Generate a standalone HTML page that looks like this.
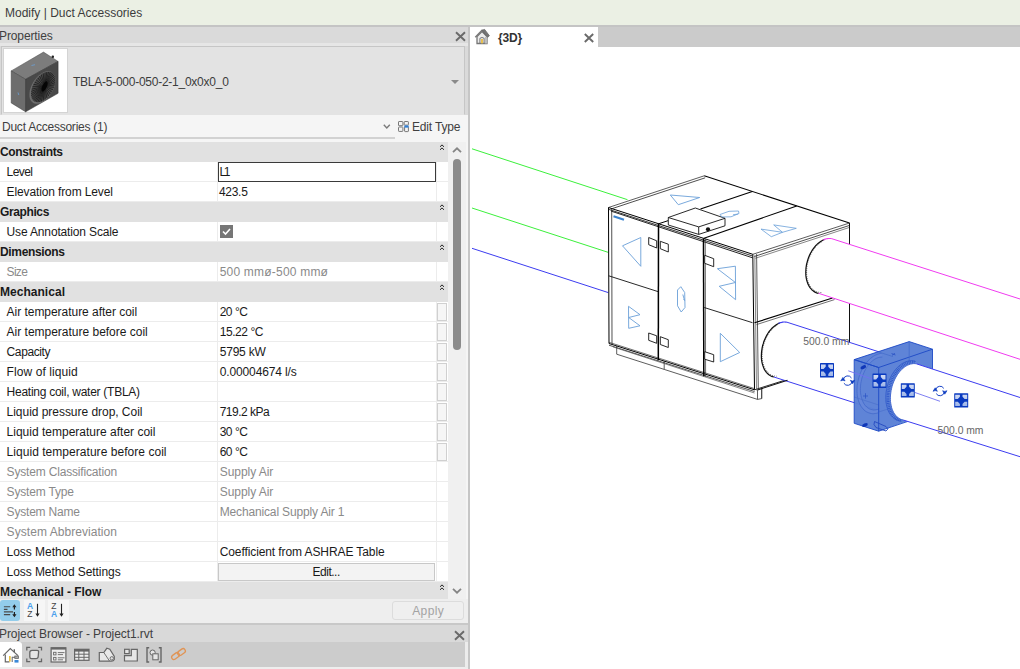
<!DOCTYPE html>
<html><head><meta charset="utf-8"><title>Revit</title>
<style>
*{box-sizing:border-box;margin:0;padding:0}
html,body{width:1020px;height:669px;overflow:hidden;background:#fff}
body{font-family:"Liberation Sans",sans-serif;font-size:12px;color:#1a1a1a;position:relative}
.abs{position:absolute}
#top{left:0;top:0;width:1020px;height:25px;background:#ebf0e4}
#topline{left:0;top:25px;width:1020px;height:2px;background:#c4c4c4}
#top span{position:absolute;left:5px;top:6px;color:#3c3c3c}
#panel{left:0;top:27px;width:468px;height:642px;background:#dadada}
#pborder{left:468px;top:27px;width:2px;height:642px;background:#c6c6c6}
#phead{left:0;top:27px;width:468px;height:18px}
#phead span{position:absolute;left:0;top:2px;color:#404040}
.row{position:absolute;left:0;width:448px;height:20px;background:#fff;border-bottom:1px solid #ececec}
.row .n{position:absolute;left:7px;top:3px;white-space:nowrap}
.row .v{position:absolute;left:219px;top:3px;white-space:nowrap}
.row.gr .n,.row.gr .v{color:#8a8a8a}
.row.hd{background:#e1e1e1;border-bottom:none}
.row .ht{position:absolute;left:0;top:3px;font-weight:bold;white-space:nowrap}
.row .chev{position:absolute;left:438.800px;top:2px}
.row .ed{position:absolute;left:218px;top:0px;width:218px;height:20px;border:1px solid #3a3a3a;background:#fff}
.row .cb{position:absolute;left:220px;top:2.5px;width:13px;height:13px}
.row .eb{position:absolute;left:218px;top:1px;width:217px;height:18px;border:1px solid #c8c8c8;background:#f3f3f3}
.row .sb{position:absolute;left:437px;top:1px;width:10px;height:18px;border:1px solid #d0d0d0;background:#f6f6f6}
.row::before{content:"";position:absolute;left:217px;top:0;width:1px;height:20px;background:#ececec}
.row::after{content:"";position:absolute;left:436px;top:0;width:1px;height:20px;background:#ececec}
.row.z1{z-index:1}
.row.hd::before,.row.hd::after{display:none}

#pheadx{left:454.700px;top:31px}
#hstrip{left:0;top:43px;width:468px;height:3px;background:#e6e6e6}
#tbox{left:1px;top:46px;width:464px;height:69px;background:#e3e3e3;border:1px solid #c6c6c6;border-bottom-color:#e3e3e3}
#thumb{left:3px;top:48px;width:65px;height:65px;background:#fff;border:1px solid #d4d4d4}
#tname{left:73px;top:75px;color:#3c3c3c;white-space:nowrap}
#tarrow{left:451px;top:80px;width:0;height:0;border-left:4px solid transparent;border-right:4px solid transparent;border-top:4px solid #8a8a8a}
#frow{left:0;top:115px;width:468px;height:27px;background:#f5f5f5}
#frow .t{position:absolute;left:2px;top:5px;color:#404040;white-space:nowrap}
#frow .ul{position:absolute;left:0;top:22px;width:395px;height:2px;background:#d2d2d2}
#frow .et{position:absolute;left:413px;top:5px;color:#404040;white-space:nowrap}
#sbar{left:448px;top:142px;width:18px;height:457px;background:#f0f0f0}
#sthumb{left:453px;top:159px;width:8px;height:191px;background:#8b8b8b;border-radius:4px}
#rstrip{left:466px;top:115px;width:2px;height:510px;background:#f5f5f5}
#btool{left:0;top:599px;width:468px;height:25px;background:#eeeeee}
#b1{left:0;top:600px;width:20px;height:21px;background:#93cdeb;border-radius:3px}
#b2{left:24px;top:600px;width:21px;height:21px;background:#f6f6f6}
#b3{left:48px;top:600px;width:21px;height:21px;background:#f6f6f6}
#apply{left:392px;top:601px;width:72px;height:19px;border:1px solid #dcdcdc;border-radius:3px;background:#efefef}
#bline{left:0;top:623px;width:468px;height:2px;background:#c8c8c8}
#pbhead{left:0;top:625px;width:468px;height:17px;background:#d9d9d9}
#pbhead span{position:absolute;left:0;top:2px;color:#404040;white-space:nowrap}
#pbtool{left:0;top:642px;width:465px;height:25px;background:#cccccc}
#pbtool1{left:0;top:642px;width:22px;height:25px;background:#fff;border-top-right-radius:3px}
#pbbot{left:0;top:667px;width:468px;height:2px;background:#eee}
#pbright{left:465px;top:642px;width:3px;height:26px;background:#ececec}
#tabbar{left:470px;top:27px;width:550px;height:20px;background:#cbcbcb}
#tab{left:470px;top:27px;width:128px;height:20px;background:#fff}
#tabt{top:31px;font-weight:bold;color:#333;white-space:nowrap}
#tabi{left:470px;top:27px;width:128px;height:20px}
#applyt{top:604px;color:#a3a3a3;white-space:nowrap}
</style></head><body>
<div id="top" class="abs"><span %%T|Modify | Duct Accessories|5%%>Modify | Duct Accessories</span></div>
<div id="topline" class="abs"></div>
<div id="panel" class="abs"></div>
<div id="pborder" class="abs"></div>
<div id="phead" class="abs"><span style="left:-1.00px;letter-spacing:-0.110px">Properties</span></div>

<svg id="pheadx" class="abs" width="11" height="11" viewBox="0 0 11 11"><path d="M1 1.200L10 9.800M10 1.200L1 9.800" stroke="#6a6a6a" stroke-width="1.900"/></svg>
<div id="hstrip" class="abs"></div><div id="tbox" class="abs"></div>
<div id="thumb" class="abs"></div>
<svg id="thumbsvg" class="abs" style="left:0;top:46px" width="70" height="70" viewBox="0 46 70 70">
<polygon points="11.2,70.9 43.5,52.1 58.1,61.4 25.6,79.3" fill="#7c7c7c" stroke="#4a4a4a" stroke-width="0.500"/>
<polygon points="11.2,70.9 25.6,79.3 25.6,111.8 11.2,102.9" fill="#6d6d6d" stroke="#3c3c3c" stroke-width="0.500"/>
<polygon points="25.600,79.300 58.100,61.400 58.100,93.300 25.600,111.800" fill="#494949" stroke="#303030" stroke-width="0.500"/>
<polygon points="55.4,80.3 55.3,82.3 55.0,84.4 54.4,86.5 53.7,88.6 52.7,90.7 51.6,92.8 50.3,94.7 48.9,96.6 47.4,98.3 45.8,99.8 44.1,101.0 42.4,102.1 40.7,102.9 39.0,103.5 37.4,103.7 35.9,103.7 34.5,103.4 33.2,102.9 32.1,102.1 31.1,101.0 30.4,99.7 29.8,98.2 29.5,96.5 29.4,94.7 29.5,92.7 29.8,90.6 30.4,88.5 31.1,86.4 32.1,84.3 33.2,82.2 34.5,80.3 35.9,78.4 37.4,76.7 39.0,75.2 40.7,74.0 42.4,72.9 44.1,72.1 45.8,71.5 47.4,71.3 48.9,71.3 50.3,71.6 51.6,72.1 52.7,72.9 53.7,74.0 54.4,75.3 55.0,76.8 55.3,78.5" fill="#6e6e6e"/>
<polygon points="55.4,80.3 55.3,82.1 55.0,84.1 54.5,86.1 53.8,88.1 52.9,90.1 51.8,92.0 50.6,93.9 49.3,95.6 47.9,97.2 46.4,98.6 44.8,99.8 43.2,100.8 41.6,101.6 40.0,102.1 38.5,102.3 37.1,102.3 35.8,102.0 34.6,101.5 33.5,100.7 32.6,99.7 31.9,98.5 31.4,97.1 31.1,95.5 31.0,93.7 31.1,91.9 31.4,89.9 31.9,87.9 32.6,85.9 33.5,83.9 34.6,82.0 35.8,80.1 37.1,78.4 38.5,76.8 40.0,75.4 41.6,74.2 43.2,73.2 44.8,72.4 46.4,71.9 47.9,71.7 49.3,71.7 50.6,72.0 51.8,72.5 52.9,73.3 53.8,74.3 54.5,75.5 55.0,76.9 55.3,78.5" fill="#4c4c4c"/>
<path d="M44.6 86.4L55.2 80.4M44.6 86.4L55.1 82.6M44.6 86.4L54.6 84.9M44.6 86.4L53.9 87.3M44.6 86.4L52.9 89.7M44.6 86.4L51.7 91.9M44.6 86.4L50.3 94.1M44.6 86.4L48.6 96.1M44.6 86.4L46.9 97.9M44.6 86.4L45.1 99.4M44.6 86.4L43.2 100.6M44.6 86.4L41.3 101.5M44.6 86.4L39.5 102.0M44.6 86.4L37.8 102.1M44.6 86.4L36.1 101.9M44.6 86.4L34.7 101.3M44.6 86.4L33.5 100.3M44.6 86.4L32.5 99.1M44.6 86.4L31.8 97.5M44.6 86.4L31.3 95.6M44.6 86.4L31.2 93.6M44.6 86.4L31.3 91.4M44.6 86.4L31.8 89.1M44.6 86.4L32.5 86.7M44.6 86.4L33.5 84.3M44.6 86.4L34.7 82.1M44.6 86.4L36.1 79.9M44.6 86.4L37.8 77.9M44.6 86.4L39.5 76.1M44.6 86.4L41.3 74.6M44.6 86.4L43.2 73.4M44.6 86.4L45.1 72.5M44.6 86.4L46.9 72.0M44.6 86.4L48.6 71.9M44.6 86.4L50.3 72.1M44.6 86.4L51.7 72.7M44.6 86.4L52.9 73.7M44.6 86.4L53.9 74.9M44.6 86.4L54.6 76.5M44.6 86.4L55.1 78.4" stroke="#141414" stroke-width="0.700" fill="none"/>
<ellipse cx="44.600" cy="86.400" rx="2.200" ry="5.500" transform="rotate(25 44.600 86.400)" fill="#050505"/>
<rect x="51.600" y="55.600" width="2.400" height="2.400" rx="1" fill="#222"/>
<path d="M31.500 65.500l3.500 -0.800M18 92.500l0.800 2.500" stroke="#6a9fd8" stroke-width="0.800" fill="none"/>
</svg>
<div id="tname" class="abs" style="left:73.00px;letter-spacing:-0.252px">TBLA-5-000-050-2-1_0x0x0_0</div>
<div id="tarrow" class="abs"></div>
<div id="frow" class="abs"><span class="t" style="left:2.00px;letter-spacing:-0.236px">Duct Accessories (1)</span><span class="ul"></span>
<svg style="position:absolute;left:383px;top:9px" width="8" height="6" viewBox="0 0 8 6"><path d="M0.800 0.800L3.800 4L6.800 0.800" stroke="#7a7a7a" stroke-width="1.400" fill="none"/></svg>
<svg style="position:absolute;left:398px;top:6px" width="12" height="12" viewBox="0 0 12 12"><g fill="#f4f4f4" stroke="#777" stroke-width="1"><rect x="0.500" y="0.500" width="4.400" height="4.200" rx="0.600"/><rect x="0.500" y="6" width="4.400" height="4.400" rx="0.600"/><rect x="6.200" y="0.500" width="4.200" height="3.600" rx="0.600"/><rect x="6.600" y="5.600" width="3.800" height="5" rx="0.600"/></g><rect x="6.400" y="4.400" width="4.200" height="2.200" fill="#2f7fd6"/></svg>
<span class="et" style="left:412.00px;letter-spacing:-0.179px">Edit Type</span></div>
<div class="row hd" style="top:142px"><span class="ht" style="left:0.00px;letter-spacing:-0.369px">Constraints</span><svg class="chev" width="6" height="7" viewBox="0 0 6 7"><path d="M1 2.800L3 0.900L5 2.800M1 5.800L3 3.900L5 5.800" stroke="#222" stroke-width="1" fill="none"/></svg></div>
<div class="row z1" style="top:162px"><span class="n" style="left:6.60px;letter-spacing:-0.600px">Level</span><span class="ed"></span><span class="v" style="left:219.40px;letter-spacing:-2.200px">L1</span></div>
<div class="row" style="top:182px"><span class="n" style="left:6.60px;letter-spacing:-0.128px">Elevation from Level</span><span class="v" style="left:219.00px;letter-spacing:-0.300px">423.5</span></div>
<div class="row hd" style="top:202px"><span class="ht" style="left:0.00px;letter-spacing:-0.386px">Graphics</span><svg class="chev" width="6" height="7" viewBox="0 0 6 7"><path d="M1 2.800L3 0.900L5 2.800M1 5.800L3 3.900L5 5.800" stroke="#222" stroke-width="1" fill="none"/></svg></div>
<div class="row" style="top:222px"><span class="n" style="left:6.60px;letter-spacing:-0.152px">Use Annotation Scale</span><span class="cb"><svg width="13" height="13" viewBox="0 0 13 13"><rect width="13" height="13" fill="#767676"/><path d="M3 6.5 L5.5 9 L10 4" stroke="#fff" stroke-width="1.6" fill="none"/></svg></span></div>
<div class="row hd" style="top:242px"><span class="ht" style="left:0.00px;letter-spacing:-0.330px">Dimensions</span><svg class="chev" width="6" height="7" viewBox="0 0 6 7"><path d="M1 2.800L3 0.900L5 2.800M1 5.800L3 3.900L5 5.800" stroke="#222" stroke-width="1" fill="none"/></svg></div>
<div class="row gr" style="top:262px"><span class="n" style="left:6.60px;letter-spacing:-0.700px">Size</span><span class="v" style="left:219.70px;letter-spacing:0.206px">500 mmø-500 mmø</span></div>
<div class="row hd" style="top:282px"><span class="ht" style="left:0.00px;letter-spacing:0.030px">Mechanical</span><svg class="chev" width="6" height="7" viewBox="0 0 6 7"><path d="M1 2.800L3 0.900L5 2.800M1 5.800L3 3.900L5 5.800" stroke="#222" stroke-width="1" fill="none"/></svg></div>
<div class="row" style="top:302px"><span class="n" style="left:6.60px;letter-spacing:-0.036px">Air temperature after coil</span><span class="v" style="left:219.70px;letter-spacing:-0.495px">20 °C</span><span class="sb"></span></div>
<div class="row" style="top:322px"><span class="n" style="left:6.60px;letter-spacing:-0.010px">Air temperature before coil</span><span class="v" style="left:219.70px;letter-spacing:-0.437px">15.22 °C</span><span class="sb"></span></div>
<div class="row" style="top:342px"><span class="n" style="left:6.60px;letter-spacing:-0.398px">Capacity</span><span class="v" style="left:219.70px;letter-spacing:-0.195px">5795 kW</span><span class="sb"></span></div>
<div class="row" style="top:362px"><span class="n" style="left:6.60px;letter-spacing:0.090px">Flow of liquid</span><span class="v" style="left:219.70px;letter-spacing:-0.125px">0.00004674 l/s</span><span class="sb"></span></div>
<div class="row" style="top:382px"><span class="n" style="left:6.60px;letter-spacing:-0.264px">Heating coil, water (TBLA)</span><span class="sb"></span></div>
<div class="row" style="top:402px"><span class="n" style="left:6.60px;letter-spacing:-0.036px">Liquid pressure drop, Coil</span><span class="v" style="left:219.70px;letter-spacing:-0.496px">719.2 kPa</span><span class="sb"></span></div>
<div class="row" style="top:422px"><span class="n" style="left:6.60px;letter-spacing:0.004px">Liquid temperature after coil</span><span class="v" style="left:219.70px;letter-spacing:-0.495px">30 °C</span><span class="sb"></span></div>
<div class="row" style="top:442px"><span class="n" style="left:6.60px;letter-spacing:0.040px">Liquid temperature before coil</span><span class="v" style="left:219.70px;letter-spacing:-0.495px">60 °C</span><span class="sb"></span></div>
<div class="row gr" style="top:462px"><span class="n" style="left:6.60px;letter-spacing:-0.174px">System Classification</span><span class="v" style="left:219.70px;letter-spacing:-0.040px">Supply Air</span></div>
<div class="row gr" style="top:482px"><span class="n" style="left:6.60px;letter-spacing:-0.180px">System Type</span><span class="v" style="left:219.70px;letter-spacing:-0.040px">Supply Air</span></div>
<div class="row gr" style="top:502px"><span class="n" style="left:6.60px;letter-spacing:-0.198px">System Name</span><span class="v" style="left:219.70px;letter-spacing:-0.147px">Mechanical Supply Air 1</span></div>
<div class="row gr" style="top:522px"><span class="n" style="left:6.60px;letter-spacing:0.055px">System Abbreviation</span></div>
<div class="row" style="top:542px"><span class="n" style="left:6.60px;letter-spacing:-0.036px">Loss Method</span><span class="v" style="left:219.70px;letter-spacing:-0.096px">Coefficient from ASHRAE Table</span></div>
<div class="row" style="top:562px"><span class="n" style="left:6.60px;letter-spacing:-0.070px">Loss Method Settings</span><span class="eb"></span><span class="v" style="left:312.60px;letter-spacing:-0.500px">Edit...</span></div>
<div class="row hd" style="top:582px"><span class="ht" style="left:0.00px;letter-spacing:-0.090px">Mechanical - Flow</span><svg class="chev" width="6" height="7" viewBox="0 0 6 7"><path d="M1 2.800L3 0.900L5 2.800M1 5.800L3 3.900L5 5.800" stroke="#222" stroke-width="1" fill="none"/></svg></div>
<div id="rstrip" class="abs"></div>
<div id="sbar" class="abs"></div>
<div id="sthumb" class="abs"></div>
<svg class="abs" style="left:451px;top:146px" width="12" height="8" viewBox="0 0 12 8"><path d="M2 6.200L6 2.300L10 6.200" stroke="#858585" stroke-width="1.800" fill="none"/></svg>
<svg class="abs" style="left:451px;top:587px" width="12" height="8" viewBox="0 0 12 8"><path d="M2 1.800L6 5.700L10 1.800" stroke="#858585" stroke-width="1.800" fill="none"/></svg>
<div id="btool" class="abs"></div>
<div id="b1" class="abs"></div><div id="b2" class="abs"></div><div id="b3" class="abs"></div>
<svg class="abs" style="left:0;top:599px" width="72" height="25" viewBox="0 0 72 25">
<g stroke="#4a4a4a" stroke-width="1.100" fill="none"><path d="M3.900 7.800H10.200M3.900 10.400H7.500M3.900 12.900H13M3.900 15.600H10.200"/><path d="M14.400 6.500V10.400M14.400 12.900V17" stroke="#222" stroke-width="1.200"/><path d="M12.300 8.300L14.400 5.300L16.500 8.300ZM12.300 15.200L14.400 18.200L16.500 15.200Z" fill="#222" stroke="none"/>
<path d="M37.500 4.800V16" stroke="#222"/><path d="M35.400 14.500L37.500 17.700L39.600 14.500Z" fill="#222" stroke="none"/>
<path d="M61.500 4.800V16" stroke="#222"/><path d="M59.400 14.500L61.500 17.700L63.600 14.500Z" fill="#222" stroke="none"/></g>
<text x="26.900" y="10.400" font-family="Liberation Sans, sans-serif" font-size="8.500" font-weight="bold" fill="#4aa0ec">A</text>
<text x="27.200" y="17.700" font-family="Liberation Sans, sans-serif" font-size="8.500" fill="#444">Z</text>
<text x="51.200" y="10.400" font-family="Liberation Sans, sans-serif" font-size="8.500" fill="#444">Z</text>
<text x="50.900" y="17.700" font-family="Liberation Sans, sans-serif" font-size="8.500" font-weight="bold" fill="#4aa0ec">A</text>
</svg>
<div id="apply" class="abs"></div><div id="applyt" class="abs" style="left:412.20px;letter-spacing:0.405px">Apply</div>
<div id="bline" class="abs"></div>
<div id="pbhead" class="abs"><span style="left:-1.00px;letter-spacing:-0.071px">Project Browser - Project1.rvt</span></div>
<svg class="abs" style="left:454px;top:630px" width="11" height="11" viewBox="0 0 11 11"><path d="M1 1.200L10 9.800M10 1.200L1 9.800" stroke="#6a6a6a" stroke-width="1.900"/></svg>
<div id="pbtool" class="abs"></div><div id="pbtool1" class="abs"></div><div id="pbbot" class="abs"></div><div id="pbright" class="abs"></div>
<svg class="abs" style="left:0;top:642px" width="200" height="25" viewBox="0 642 200 25">
<g fill="none" stroke="#666" stroke-width="1.2">
<path d="M3.2 655.600L10.300 648.600L18 655.600"/><path d="M14.300 649.300V652.200" stroke-width="1.400"/><path d="M5.300 654.500V661.800H9.500"/>
<path d="M12.200 656.800V662M12.200 657.300H15" stroke-width="1"/><rect x="14.800" y="656" width="3.600" height="2.400" fill="#aaa" stroke-width="0.800"/>
<path d="M26.800 650.500V647.300H30.200M38.200 647.300H41.500V650.500M41.500 658.500V661.600H38.200M30.200 661.600H26.800V658.500" stroke-width="1.300"/>
<path d="M29.800 652.500Q29.800 650.300 32 650.300H37Q38.800 650.300 38.600 652L38.200 656.500Q38 658.600 36 658.600H31.500Q29.800 658.600 29.800 657Z" fill="#e6e6e6" stroke-width="1.300"/>
<rect x="51.100" y="647.800" width="14.800" height="14.200" fill="#eee"/><path d="M51.100 648.500H65.900" stroke-width="2.200"/>
<rect x="53.600" y="652.300" width="2.400" height="2.600" stroke-width="0.900"/><rect x="53.600" y="657.400" width="2.400" height="2.600" stroke-width="0.900"/>
<path d="M57.800 652.600H64.500M57.800 654.600H63M57.800 657.800H64.500M57.800 659.800H63" stroke-width="0.900"/>
<rect x="74.600" y="649.300" width="14.400" height="11" fill="#eee"/><path d="M74.600 650.400H89 " stroke-width="2.400"/><path d="M74.600 654.200H89M74.600 657.300H89M78.800 651V660.300M84 651V660.300" stroke-width="1"/>
<path d="M99.300 661.200V652.500H103.800L106.800 648.300L109.800 649.200L114.300 656.500V659.500Q113.500 661.200 111.500 661.200Z" fill="#e8e8e8" stroke-width="1.200"/><path d="M103.800 652.500L109.500 661" stroke-width="0.900"/><circle cx="111.800" cy="658.300" r="1.700" fill="#ddd" stroke-width="0.900"/>
<rect x="124.600" y="649.300" width="4.600" height="4.300" fill="#e6e6e6"/><path d="M131.300 649.300H137.300V661H124.500V655.600H131.300Z" fill="#e6e6e6"/>
<path d="M149.200 647.800H147V662H149.200M158.800 647.800H161V662H158.800" stroke-width="1.400"/><circle cx="152.600" cy="652.600" r="2.600" fill="#e6e6e6" stroke-width="1"/><rect x="152.800" y="653.800" width="5.400" height="6" fill="#e6e6e6" stroke-width="1"/>
</g>
<rect x="9" y="656" width="1.700" height="5.600" fill="#e8c040"/>
<rect x="14.500" y="660" width="4" height="2.600" fill="#3b8ad8"/>
<g fill="none" stroke="#e09455" stroke-width="1.300"><rect x="171.300" y="653.800" width="8.400" height="4.600" rx="2.300" transform="rotate(-36 175.500 656.100)"/><rect x="177.300" y="649.800" width="8.400" height="4.600" rx="2.300" transform="rotate(-36 181.500 652.100)"/></g>
</svg>
<div id="tabbar" class="abs"></div>
<div id="tab" class="abs"></div><div id="tabt" class="abs" style="left:498.00px;letter-spacing:-0.150px">{3D}</div><div id="tabi" class="abs">
<svg style="position:absolute;left:3.600px;top:1.400px" width="17" height="17" viewBox="0 0 17 17"><path d="M3 8.500V15.500H13V8.500L8 3.500Z" fill="#ececec" stroke="#767676" stroke-width="1.300"/><path d="M10.800 9V15.500H13V8.500Z" fill="#bdbdbd"/><path d="M1.300 9.300L8 2.300L11.500 6" fill="none" stroke="#7a7a7a" stroke-width="1.500"/><path d="M8 2.300L10.600 1.400L15.400 7.800L13.600 9.300Z" fill="#747474" stroke="#666" stroke-width="0.800"/><path d="M5.900 15.500V10.300Q8 8.600 10.100 10.300V15.500" fill="none" stroke="#777" stroke-width="1"/><rect x="7" y="11" width="2" height="4.300" fill="#e8c050"/></svg>
<svg style="position:absolute;left:114px;top:6px" width="10" height="10" viewBox="0 0 10 10"><path d="M0.800 1L9.200 9M9.200 1L0.800 9" stroke="#6a6a6a" stroke-width="1.900"/></svg>
</div>

<svg id="view" width="550" height="622" viewBox="470 47 550 622" style="position:absolute;left:470px;top:47px">
<line x1="472.0" y1="148.8" x2="627.5" y2="199.7" stroke="#3cf03c" stroke-width="1" />
<line x1="472.0" y1="208.0" x2="608.3" y2="252.4" stroke="#3cf03c" stroke-width="1" />
<line x1="472.0" y1="248.3" x2="608.3" y2="292.6" stroke="#3c3cf0" stroke-width="1" />
<path d="M608.5 207.5 L704.2 175.8 L849.5 223.0 L849.5 359.8 L754.5 389.8 L609.0 343.5 Z" stroke="none" stroke-width="0" fill="#fff" stroke-linejoin="round" />
<path d="M616.7 346.0 L616.7 354.2 L664.2 369.4 L664.2 361.0" stroke="#333" stroke-width="0.8" fill="#fff" stroke-linejoin="round" />
<path d="M664.2 369.4 L757.5 399.4 L761.7 398.6 L761.7 388.0" stroke="#333" stroke-width="0.8" fill="#fff" stroke-linejoin="round" />
<line x1="757.5" y1="399.4" x2="757.5" y2="390.5" stroke="#333" stroke-width="0.8" />
<line x1="761.7" y1="398.6" x2="787.5" y2="380.3" stroke="#333" stroke-width="0.0" />
<path d="M608.5 207.5 L704.2 175.8 L849.5 223.0 L752.8 254.3 Z" stroke="none" stroke-width="0" fill="#fff" stroke-linejoin="round" />
<line x1="608.5" y1="207.5" x2="704.2" y2="175.8" stroke="#333" stroke-width="0.8" />
<line x1="704.2" y1="175.8" x2="849.5" y2="223.0" stroke="#000" stroke-width="1.1" />
<line x1="849.5" y1="223.0" x2="752.8" y2="254.3" stroke="#333" stroke-width="0.8" />
<line x1="610.7" y1="209.1" x2="705.2" y2="177.8" stroke="#222" stroke-width="0.8" />
<line x1="754.3" y1="256.5" x2="849.5" y2="225.4" stroke="#222" stroke-width="0.8" />
<line x1="755.3" y1="258.3" x2="849.5" y2="227.4" stroke="#555" stroke-width="0.7" />
<path d="M608.5 207.5 L752.8 254.3 L754.5 389.8 L609.0 343.5 Z" stroke="#000" stroke-width="1.0" fill="#fff" stroke-linejoin="round" />
<line x1="608.5" y1="209.3" x2="752.8" y2="256.1" stroke="#222" stroke-width="0.9" />
<line x1="611.0" y1="211.1" x2="752.8" y2="257.9" stroke="#111" stroke-width="0.9" />
<line x1="611.7" y1="208.5" x2="612.0" y2="344.7" stroke="#222" stroke-width="0.8" />
<line x1="609.0" y1="342.3" x2="754.5" y2="388.6" stroke="#333" stroke-width="0.7" />
<line x1="609.0" y1="345.2" x2="754.5" y2="391.5" stroke="#222" stroke-width="0.8" />
<line x1="613.0" y1="346.9" x2="754.5" y2="393.0" stroke="#555" stroke-width="0.7" />
<line x1="849.5" y1="223.0" x2="849.5" y2="359.8" stroke="#111" stroke-width="1.0" />
<line x1="849.5" y1="359.8" x2="754.5" y2="389.8" stroke="#111" stroke-width="0.9" />
<line x1="754.8" y1="255.3" x2="756.5" y2="389.3" stroke="#555" stroke-width="0.7" />
<line x1="756.6" y1="254.1" x2="758.3" y2="388.6" stroke="#333" stroke-width="0.8" />
<line x1="658.5" y1="223.8" x2="658.3" y2="360.2" stroke="#000" stroke-width="1.5" />
<line x1="703.5" y1="238.4" x2="703.8" y2="376.2" stroke="#000" stroke-width="1.5" />
<line x1="705.3" y1="239.0" x2="705.6" y2="376.8" stroke="#333" stroke-width="0.7" />
<line x1="608.7" y1="275.8" x2="658.3" y2="291.7" stroke="#111" stroke-width="0.9" />
<line x1="704.2" y1="307.5" x2="752.5" y2="322.7" stroke="#111" stroke-width="0.9" />
<line x1="754.5" y1="322.8" x2="832.5" y2="298.0" stroke="#000" stroke-width="1.2" />
<line x1="756.5" y1="324.6" x2="834.5" y2="299.6" stroke="#333" stroke-width="0.7" />
<line x1="752.3" y1="191.5" x2="700.5" y2="209.0" stroke="#000" stroke-width="1.1" />
<line x1="796.7" y1="205.9" x2="704.0" y2="238.2" stroke="#000" stroke-width="1.1" />
<line x1="658.5" y1="223.8" x2="668.3" y2="220.6" stroke="#000" stroke-width="1.0" />
<path d="M668.3 217.5 L695.3 208.0 L725.0 218.3 L725.0 225.8 L698.7 234.4 L668.3 225.0 Z" stroke="#111" stroke-width="0.9" fill="#fff" stroke-linejoin="round" />
<line x1="668.3" y1="217.5" x2="698.7" y2="226.9" stroke="#111" stroke-width="0.9" />
<line x1="698.7" y1="226.9" x2="725.0" y2="218.3" stroke="#111" stroke-width="0.9" />
<line x1="698.7" y1="226.9" x2="698.7" y2="234.4" stroke="#111" stroke-width="0.9" />
<circle cx="708" cy="229.3" r="2.1" fill="#111"/>
<path d="M648.7 237.5 L656.7 240.8 L656.7 248.0 L648.7 244.7 Z" stroke="#111" stroke-width="0.9" fill="#fff" stroke-linejoin="round" />
<path d="M660.3 241.3 L668.3 244.2 L668.3 252.0 L660.3 248.7 Z" stroke="#111" stroke-width="0.9" fill="#fff" stroke-linejoin="round" />
<path d="M704.7 255.3 L713.7 258.7 L713.7 266.7 L704.7 263.3 Z" stroke="#111" stroke-width="0.9" fill="#fff" stroke-linejoin="round" />
<path d="M648.7 333.0 L656.7 335.8 L656.7 343.3 L648.7 340.3 Z" stroke="#111" stroke-width="0.9" fill="#fff" stroke-linejoin="round" />
<path d="M660.3 336.7 L668.3 339.7 L668.3 347.5 L660.3 344.5 Z" stroke="#111" stroke-width="0.9" fill="#fff" stroke-linejoin="round" />
<path d="M704.7 351.7 L713.7 354.7 L713.7 362.0 L704.7 359.2 Z" stroke="#111" stroke-width="0.9" fill="#fff" stroke-linejoin="round" />
<path d="M670.3 195.0 L699.7 197.5 L678.3 204.7 Z" stroke="#6a9fd8" stroke-width="0.9" fill="none" stroke-linejoin="round" />
<path d="M622.5 245.8 L640.8 237.5 L640.8 266.3 Z" stroke="#6a9fd8" stroke-width="0.9" fill="none" stroke-linejoin="round" />
<path d="M628.5 306.3 L640.0 314.7 L628.7 317.5 L640.0 325.8 L628.7 328.3 Z" stroke="#6a9fd8" stroke-width="0.9" fill="none" stroke-linejoin="round" />
<path d="M677.5 290.0 L680.8 286.7 L684.7 292.5 L685.0 307.5 L681.2 312.0 L677.5 305.8 Z" stroke="#6a9fd8" stroke-width="0.9" fill="none" stroke-linejoin="round" />
<path d="M682.8 294.5 L684.6 300.5 L683.6 299.2" stroke="#6a9fd8" stroke-width="0.9" fill="none" stroke-linejoin="round" />
<path d="M717.4 268.7 L735.4 266.2 L735.6 299.7 L719.2 286.3 L735.4 282.5 Z" stroke="#6a9fd8" stroke-width="0.9" fill="none" stroke-linejoin="round" />
<path d="M720.3 333.3 L739.7 352.5 L720.3 361.7 Z" stroke="#6a9fd8" stroke-width="0.9" fill="none" stroke-linejoin="round" />
<path d="M720.0 214.5 L729.0 211.3 L738.5 211.0 L739.0 213.5 L731.0 216.8 L722.0 217.0 Z" stroke="#6a9fd8" stroke-width="0.8" fill="none" stroke-linejoin="round" />
<line x1="733.0" y1="214.8" x2="738.0" y2="214.0" stroke="#6a9fd8" stroke-width="0.8" />
<path d="M761.0 229.1 L782.5 232.3 L771.3 236.7 Z" stroke="#6a9fd8" stroke-width="0.8" fill="none" stroke-linejoin="round" />
<path d="M773.7 224.9 L796.3 228.3 L782.5 232.3 Z" stroke="#6a9fd8" stroke-width="0.8" fill="none" stroke-linejoin="round" />
<line x1="613.5" y1="216.3" x2="624.0" y2="219.8" stroke="#3d85d0" stroke-width="2.2" />
<path d="M831.8 238.7 L830.4 238.5 L828.9 238.5 L827.4 238.7 L825.9 239.0 L824.4 239.5 L822.8 240.2 L821.3 241.0 L819.9 242.0 L818.4 243.1 L817.0 244.4 L815.6 245.8 L814.4 247.3 L813.1 249.0 L812.0 250.7 L810.9 252.5 L809.9 254.5 L809.0 256.5 L808.2 258.5 L807.5 260.6 L807.0 262.8 L806.5 264.9 L806.2 267.1 L805.9 269.2 L805.8 271.4 L805.8 273.5 L805.9 275.5 L806.2 277.5 L806.6 279.4 L807.0 281.3 L807.6 283.0 L808.3 284.7 L809.1 286.2 L810.0 287.6 L811.0 288.9 L812.1 290.0 L813.3 291.0 L814.5 291.8 L815.8 292.5 L817.2 293.0 L818.6 293.3 L1020.0 359.3 L1020.0 299.0 Z" stroke="none" stroke-width="0" fill="#fff" stroke-linejoin="round" />
<path d="M824.5 239.4 L823.2 240.0 L821.9 240.7 L820.6 241.5 L819.3 242.4 L818.0 243.4 L816.8 244.6 L815.6 245.8 L814.5 247.2 L813.4 248.6 L812.3 250.1 L811.4 251.7 L810.5 253.3 L809.6 255.1 L808.9 256.8 L808.2 258.6 L807.6 260.5 L807.1 262.4 L806.6 264.2 L806.3 266.1 L806.0 268.0 L805.9 269.9 L805.8 271.8 L805.8 273.6 L805.9 275.4 L806.1 277.2 L806.4 278.9 L806.8 280.5 L807.3 282.1 L807.8 283.6 L808.5 285.0 L809.2 286.4 L810.0 287.6 L810.9 288.7 L811.8 289.7 L812.8 290.6 L813.9 291.4 L815.0 292.1 L816.1 292.6 L817.3 293.1 L818.6 293.3" stroke="#111" stroke-width="1.25" fill="none" stroke-linejoin="round" />
<path d="M822.0 241.6 L820.7 242.4 L819.5 243.3 L818.3 244.3 L817.1 245.4 L816.0 246.6 L814.9 247.9 L813.8 249.3 L812.9 250.7 L811.9 252.2 L811.1 253.8 L810.3 255.5 L809.5 257.2 L808.9 258.9 L808.3 260.7 L807.8 262.5 L807.4 264.3 L807.1 266.2 L806.8 268.0 L806.7 269.8 L806.6 271.6 L806.6 273.4 L806.7 275.1 L806.9 276.8 L807.2 278.4 L807.6 280.0 L808.0 281.5 L808.6 283.0 L809.2 284.3 L809.9 285.6 L810.6 286.8 L811.5 287.9 L812.4 288.9 L813.3 289.7 L814.3 290.5 L815.4 291.1 L816.5 291.6 L817.7 292.0 L818.9 292.3 L820.1 292.5 L821.3 292.5" stroke="#222" stroke-width="1.0" fill="none" stroke-linejoin="round" stroke-dasharray="0.6 1.5"/>
<path d="M831.8 238.7 L830.8 238.5 L829.7 238.5 L828.7 238.5 L827.6 238.6 L826.5 238.8 L825.4 239.1 L824.3 239.5 L823.2 240.0" stroke="#f03cf0" stroke-width="1.1" fill="none" stroke-linejoin="round" />
<line x1="831.8" y1="238.7" x2="1020.0" y2="299.0" stroke="#f03cf0" stroke-width="1" />
<line x1="818.6" y1="293.3" x2="1020.0" y2="359.3" stroke="#f03cf0" stroke-width="1" />
<path d="M786.9 322.2 L785.5 322.0 L784.0 322.0 L782.6 322.2 L781.1 322.5 L779.6 323.0 L778.1 323.7 L776.6 324.5 L775.2 325.4 L773.7 326.6 L772.4 327.8 L771.0 329.2 L769.8 330.8 L768.6 332.4 L767.4 334.1 L766.4 336.0 L765.4 337.9 L764.6 339.9 L763.8 342.0 L763.1 344.1 L762.5 346.2 L762.1 348.4 L761.7 350.5 L761.5 352.7 L761.4 354.8 L761.4 356.9 L761.5 359.0 L761.8 361.0 L762.1 363.0 L762.6 364.8 L763.2 366.6 L763.9 368.2 L764.6 369.8 L765.5 371.2 L766.5 372.5 L767.6 373.6 L768.7 374.6 L769.9 375.4 L771.2 376.1 L772.5 376.6 L773.9 377.0 L880.0 410.9 L880.0 352.2 Z" stroke="none" stroke-width="0" fill="#fff" stroke-linejoin="round" />
<path d="M779.7 322.9 L778.4 323.5 L777.1 324.2 L775.9 325.0 L774.6 325.9 L773.4 326.9 L772.2 328.0 L771.0 329.3 L769.9 330.6 L768.8 332.0 L767.8 333.5 L766.9 335.1 L766.0 336.8 L765.2 338.5 L764.4 340.3 L763.7 342.1 L763.2 343.9 L762.6 345.8 L762.2 347.7 L761.9 349.6 L761.6 351.5 L761.5 353.4 L761.4 355.3 L761.4 357.1 L761.5 358.9 L761.7 360.7 L762.0 362.4 L762.4 364.1 L762.9 365.6 L763.4 367.1 L764.0 368.6 L764.7 369.9 L765.5 371.1 L766.4 372.3 L767.3 373.3 L768.3 374.2 L769.3 375.0 L770.4 375.7 L771.5 376.3 L772.7 376.7 L773.9 377.0" stroke="#111" stroke-width="1.25" fill="none" stroke-linejoin="round" />
<path d="M777.2 325.1 L776.0 325.9 L774.8 326.8 L773.6 327.8 L772.5 328.9 L771.4 330.0 L770.3 331.3 L769.3 332.7 L768.3 334.2 L767.4 335.7 L766.6 337.3 L765.8 338.9 L765.1 340.6 L764.4 342.4 L763.9 344.2 L763.4 346.0 L763.0 347.8 L762.7 349.6 L762.4 351.4 L762.3 353.3 L762.2 355.1 L762.2 356.8 L762.3 358.6 L762.5 360.3 L762.8 361.9 L763.2 363.5 L763.6 365.1 L764.1 366.5 L764.7 367.9 L765.4 369.2 L766.2 370.4 L767.0 371.4 L767.8 372.4 L768.8 373.3 L769.8 374.1 L770.8 374.7 L771.9 375.3 L773.0 375.7 L774.2 376.0 L775.4 376.1 L776.6 376.2" stroke="#222" stroke-width="1.0" fill="none" stroke-linejoin="round" stroke-dasharray="0.6 1.5"/>
<path d="M786.9 322.2 L785.9 322.1 L784.8 322.0 L783.8 322.0 L782.7 322.1 L781.6 322.4 L780.6 322.6 L779.5 323.0 L778.4 323.5" stroke="#3c3cf0" stroke-width="1.1" fill="none" stroke-linejoin="round" />
<line x1="786.9" y1="322.2" x2="880.0" y2="352.2" stroke="#3c3cf0" stroke-width="1" />
<line x1="773.9" y1="377.0" x2="880.0" y2="410.9" stroke="#3c3cf0" stroke-width="1" />
<line x1="756.7" y1="390.2" x2="787.5" y2="380.3" stroke="#111" stroke-width="1.1" />
<line x1="761.7" y1="398.6" x2="761.7" y2="389.0" stroke="#333" stroke-width="0.8" />
<text x="803.3" y="345.3" font-family="Liberation Sans, sans-serif" font-size="10.3" fill="#666" textLength="46" lengthAdjust="spacingAndGlyphs">500.0 mm</text>
<path d="M854.2 359.6 L909.2 341.6 L932.5 349.2 L932.5 412.5 L878.7 431.2 L854.2 423.3 Z" stroke="none" stroke-width="0" fill="#5a80d6" stroke-linejoin="round" fill-opacity="0.97"/>
<path d="M882.0 355.2 L880.7 355.3 L879.4 355.5 L878.1 355.9 L876.8 356.3 L875.5 356.9 L874.2 357.7 L873.0 358.5 L871.7 359.5 L870.5 360.5 L869.3 361.7 L868.2 363.0 L867.1 364.3 L866.0 365.8 L865.0 367.3 L864.1 368.9 L863.2 370.6 L862.4 372.3 L861.7 374.1 L861.0 375.9 L860.4 377.8 L859.9 379.7 L859.5 381.6 L859.2 383.5 L858.9 385.4 L858.8 387.3 L858.7 389.2 L858.7 391.1 L858.8 392.9 L859.0 394.7 L859.3 396.4 L859.7 398.1 L860.1 399.7 L860.7 401.3 L861.3 402.7 L862.0 404.1 L862.7 405.3 L863.6 406.5 L864.5 407.6 L865.4 408.5 L866.4 409.4 L867.5 410.1 L868.6 410.7 L869.8 411.1 L871.0 411.5 L872.2 411.7 L873.5 411.8 L874.8 411.8 L876.1 411.6 L877.4 411.3 L878.7 410.9" stroke="#6587da" stroke-width="3.2" fill="none" stroke-linejoin="round" />
<path d="M881.6 353.4 L880.3 353.5 L878.9 353.8 L877.5 354.3 L876.1 354.8 L874.7 355.5 L873.3 356.3 L872.0 357.3 L870.7 358.3 L869.4 359.5 L868.1 360.7 L866.9 362.1 L865.8 363.6 L864.7 365.1 L863.6 366.7 L862.6 368.4 L861.7 370.2 L860.9 372.0 L860.1 373.9 L859.4 375.8 L858.8 377.8 L858.3 379.8 L857.9 381.7 L857.5 383.7 L857.2 385.7 L857.1 387.7 L857.0 389.7 L857.0 391.7 L857.1 393.6 L857.3 395.4 L857.6 397.2 L858.0 399.0 L858.5 400.7 L859.0 402.3 L859.7 403.8 L860.4 405.2 L861.2 406.6 L862.1 407.8 L863.0 408.9 L864.0 410.0 L865.1 410.9 L866.2 411.7 L867.4 412.3 L868.6 412.8 L869.9 413.2 L871.2 413.5 L872.5 413.7 L873.8 413.7 L875.2 413.5 L876.6 413.3 L878.0 412.9" stroke="#3f65c9" stroke-width="0.7" fill="none" stroke-linejoin="round" />
<path d="M882.3 357.1 L881.1 357.1 L879.9 357.2 L878.7 357.5 L877.4 357.9 L876.2 358.4 L875.0 359.0 L873.8 359.8 L872.7 360.7 L871.5 361.6 L870.4 362.7 L869.3 363.9 L868.3 365.1 L867.3 366.5 L866.4 367.9 L865.5 369.5 L864.6 371.0 L863.9 372.7 L863.2 374.4 L862.6 376.1 L862.0 377.9 L861.6 379.7 L861.2 381.5 L860.8 383.3 L860.6 385.1 L860.5 386.9 L860.4 388.8 L860.4 390.5 L860.5 392.3 L860.7 394.0 L861.0 395.6 L861.3 397.2 L861.8 398.7 L862.3 400.2 L862.9 401.6 L863.5 402.9 L864.2 404.1 L865.0 405.2 L865.9 406.1 L866.8 407.0 L867.8 407.8 L868.8 408.5 L869.8 409.0 L870.9 409.4 L872.0 409.7 L873.2 409.9 L874.4 409.9 L875.6 409.8 L876.8 409.6 L878.0 409.3 L879.2 408.8" stroke="#3f65c9" stroke-width="0.7" fill="none" stroke-linejoin="round" />
<line x1="878.3" y1="351.9" x2="893.0" y2="356.6" stroke="#466ecc" stroke-width="0.8" />
<line x1="854.2" y1="397.0" x2="878.7" y2="405.0" stroke="#4a70cc" stroke-width="0.7" />
<line x1="878.7" y1="412.0" x2="900.0" y2="405.0" stroke="#4a70cc" stroke-width="0.7" />
<path d="M854.2 359.6 L878.7 367.5 L878.7 431.2 L854.2 423.3 Z" stroke="#1d49c6" stroke-width="0.9" fill="none" stroke-linejoin="round" />
<path d="M854.2 359.6 L909.2 341.6 L932.5 349.2 L878.7 367.5 Z" stroke="#1d49c6" stroke-width="0.9" fill="none" stroke-linejoin="round" />
<line x1="932.5" y1="349.2" x2="932.5" y2="370.0" stroke="#1d49c6" stroke-width="0.9" />
<line x1="878.7" y1="431.2" x2="908.5" y2="421.2" stroke="#1d49c6" stroke-width="0.9" />
<line x1="909.2" y1="341.6" x2="909.2" y2="362.0" stroke="#3f68cc" stroke-width="0.7" />
<ellipse cx="863.3" cy="367.2" rx="3" ry="1.700" transform="rotate(-25 863.3 367.2)" fill="#1038b8"/>
<ellipse cx="865" cy="425" rx="3" ry="1.700" transform="rotate(-25 865 425)" fill="#1038b8"/>
<line x1="865.5" y1="393.2" x2="865.5" y2="398.6" stroke="#2a52c4" stroke-width="0.7" />
<line x1="863.0" y1="396.0" x2="868.0" y2="396.0" stroke="#2a52c4" stroke-width="0.7" />
<line x1="891.5" y1="353.5" x2="895.5" y2="355.0" stroke="#2a52c4" stroke-width="0.8" />
<line x1="892.0" y1="355.3" x2="895.0" y2="353.3" stroke="#2a52c4" stroke-width="0.8" />
<path d="M874.5 421.5 L886.0 426.5 L888.0 428.8 L886.0 431.0 L876.0 427.5 L874.0 424.5 Z" stroke="#2448c0" stroke-width="0.9" fill="none" stroke-linejoin="round" />
<path d="M916.4 363.8 L915.0 363.6 L913.5 363.6 L912.0 363.8 L910.5 364.1 L909.0 364.6 L907.4 365.3 L905.9 366.1 L904.5 367.1 L903.0 368.3 L901.6 369.6 L900.2 371.0 L899.0 372.5 L897.7 374.2 L896.6 376.0 L895.5 377.9 L894.5 379.9 L893.6 381.9 L892.8 384.0 L892.1 386.2 L891.6 388.4 L891.1 390.6 L890.8 392.8 L890.5 395.0 L890.4 397.2 L890.4 399.4 L890.5 401.5 L890.8 403.6 L891.2 405.6 L891.6 407.5 L892.2 409.3 L892.9 411.0 L893.7 412.6 L894.6 414.0 L895.6 415.3 L896.7 416.5 L897.9 417.5 L899.1 418.4 L900.4 419.1 L901.8 419.6 L903.2 420.0 L1020.0 456.7 L1020.0 397.5 Z" stroke="none" stroke-width="0" fill="#fff" stroke-linejoin="round" />
<path d="M914.5 362.1 L913.0 362.0 L911.4 362.0 L909.8 362.3 L908.3 362.7 L906.7 363.3 L905.1 364.0 L903.6 365.0 L902.1 366.0 L900.6 367.3 L899.1 368.7 L897.8 370.2 L896.4 371.8 L895.2 373.6 L894.0 375.5 L892.9 377.4 L891.9 379.5 L891.1 381.6 L890.3 383.8 L889.6 386.0 L889.0 388.3 L888.6 390.6 L888.2 392.9 L888.0 395.1 L887.9 397.4 L887.9 399.6 L888.1 401.8 L888.4 403.9 L888.7 405.9 L889.3 407.9 L889.9 409.7 L890.6 411.4 L891.5 413.1 L892.4 414.5 L893.4 415.9 L894.6 417.1 L895.8 418.1 L897.0 419.0 L898.4 419.7 L899.8 420.3 L901.3 420.6" stroke="#2c55c8" stroke-width="2.8" fill="none" stroke-linejoin="round" stroke-dasharray="0.8 0.9"/>
<path d="M915.7 361.5 L914.1 361.0 L912.5 360.8 L910.8 360.7 L909.1 360.9 L907.3 361.3 L905.6 361.9 L903.8 362.7 L902.1 363.6 L900.4 364.8 L898.8 366.2 L897.2 367.7 L895.7 369.4 L894.3 371.2 L892.9 373.2 L891.6 375.3 L890.5 377.6 L889.4 379.9 L888.5 382.3 L887.7 384.7 L887.1 387.2 L886.5 389.7 L886.1 392.2 L885.9 394.8 L885.8 397.2 L885.9 399.7 L886.0 402.1 L886.4 404.4 L886.9 406.6 L887.5 408.7 L888.2 410.7 L889.1 412.5 L890.1 414.2 L891.2 415.7 L892.5 417.1 L893.8 418.2 L895.2 419.2 L896.7 420.0 L898.3 420.5 L899.9 420.9 L901.6 421.1" stroke="#2c55c8" stroke-width="0.8" fill="none" stroke-linejoin="round" />
<path d="M916.4 363.8 L915.0 363.6 L913.5 363.6 L912.0 363.8 L910.5 364.1 L909.0 364.6 L907.4 365.3 L905.9 366.1 L904.5 367.1 L903.0 368.3 L901.6 369.6 L900.2 371.0 L899.0 372.5 L897.7 374.2 L896.6 376.0 L895.5 377.9 L894.5 379.9 L893.6 381.9 L892.8 384.0 L892.1 386.2 L891.6 388.4 L891.1 390.6 L890.8 392.8 L890.5 395.0 L890.4 397.2 L890.4 399.4 L890.5 401.5 L890.8 403.6 L891.2 405.6 L891.6 407.5 L892.2 409.3 L892.9 411.0 L893.7 412.6 L894.6 414.0 L895.6 415.3 L896.7 416.5 L897.9 417.5 L899.1 418.4 L900.4 419.1 L901.8 419.6 L903.2 420.0" stroke="#3a60cc" stroke-width="0.9" fill="none" stroke-linejoin="round" />
<line x1="916.4" y1="363.8" x2="1020.0" y2="397.5" stroke="#3c3cf0" stroke-width="1" />
<line x1="903.2" y1="420.0" x2="1020.0" y2="456.7" stroke="#3c3cf0" stroke-width="1" />
<line x1="915.0" y1="392.5" x2="940.0" y2="401.3" stroke="#7070f0" stroke-width="0.9" />
<line x1="848.3" y1="370.8" x2="872.5" y2="379.2" stroke="#7070f0" stroke-width="0.9" />
<text x="937.5" y="433.6" font-family="Liberation Sans, sans-serif" font-size="10.3" fill="#666" textLength="46" lengthAdjust="spacingAndGlyphs">500.0 mm</text>
<defs><linearGradient id="gg" x1="0" y1="0" x2="0" y2="1"><stop offset="0" stop-color="#cfdaf3"/><stop offset="1" stop-color="#9fb6e8"/></linearGradient></defs>
<g transform="translate(820.0 363.1)"><rect x="0" y="0" width="14" height="14.4" rx="0.6" fill="#0a3ac0"/><path d="M1 1.5H5.700V3.600L3.600 5.900H1Z M13 1.500H8.300V3.600L10.400 5.900H13Z M1 12.900H5.700V10.800L3.600 8.500H1Z M13 12.900H8.300V10.800L10.400 8.500H13Z" fill="url(#gg)"/></g>
<g transform="translate(872.5 373.5)"><rect x="0" y="0" width="14" height="14.4" rx="0.6" fill="#0a3ac0"/><path d="M1 1.5H5.700V3.600L3.600 5.900H1Z M13 1.500H8.300V3.600L10.400 5.900H13Z M1 12.900H5.700V10.800L3.600 8.500H1Z M13 12.900H8.300V10.800L10.400 8.500H13Z" fill="url(#gg)"/></g>
<g transform="translate(900.8 383.2)"><rect x="0" y="0" width="14" height="14.4" rx="0.6" fill="#0a3ac0"/><path d="M1 1.5H5.700V3.600L3.600 5.900H1Z M13 1.500H8.300V3.600L10.400 5.900H13Z M1 12.900H5.700V10.800L3.600 8.500H1Z M13 12.900H8.300V10.800L10.400 8.500H13Z" fill="url(#gg)"/></g>
<g transform="translate(954.2 393.2)"><rect x="0" y="0" width="14" height="14.4" rx="0.6" fill="#0a3ac0"/><path d="M1 1.5H5.700V3.600L3.600 5.900H1Z M13 1.500H8.300V3.600L10.400 5.900H13Z M1 12.900H5.700V10.800L3.600 8.500H1Z M13 12.900H8.300V10.800L10.400 8.500H13Z" fill="url(#gg)"/></g>
<g transform="translate(847.7 380.6)" stroke="#1a44c8" fill="none" stroke-width="1"><path d="M-4.300 -1.200A4.400 4.400 0 0 1 3.800 -2.600"/><path d="M4.300 1.200A4.400 4.400 0 0 1 -3.800 2.600"/><path d="M-7 0.300L-4.800 -3.200L-2.600 0.300L-4.800 -0.400Z" fill="#0a3ac0" stroke="#0a3ac0" stroke-width="0.600"/><path d="M7 -0.300L4.800 3.200L2.600 -0.300L4.800 0.400Z" fill="#0a3ac0" stroke="#0a3ac0" stroke-width="0.600"/></g>
<g transform="translate(940.0 391.0)" stroke="#1a44c8" fill="none" stroke-width="1"><path d="M-4.300 -1.200A4.400 4.400 0 0 1 3.800 -2.600"/><path d="M4.300 1.200A4.400 4.400 0 0 1 -3.800 2.600"/><path d="M-7 0.300L-4.800 -3.200L-2.600 0.300L-4.800 -0.400Z" fill="#0a3ac0" stroke="#0a3ac0" stroke-width="0.600"/><path d="M7 -0.300L4.800 3.200L2.600 -0.300L4.800 0.400Z" fill="#0a3ac0" stroke="#0a3ac0" stroke-width="0.600"/></g>
</svg>

</body></html>
